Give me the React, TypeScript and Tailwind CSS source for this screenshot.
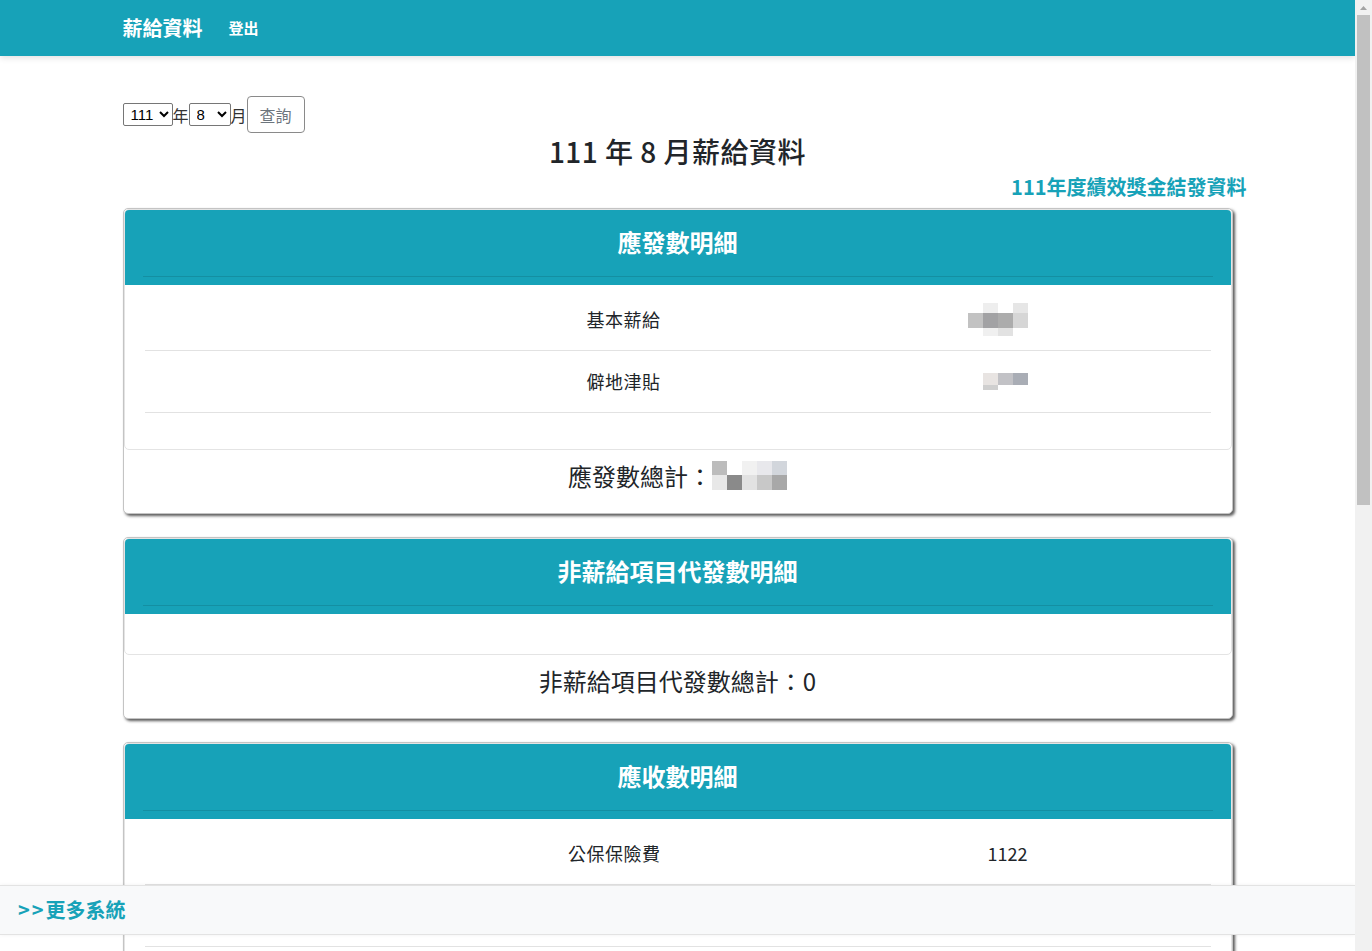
import React from "react";

const FONT = { fontFamily: '"Noto Sans CJK TC", "Noto Sans", sans-serif' };

type Cell = string | null;

function Mosaic({ rows }: { rows: { h: number; cells: Cell[] }[] }) {
  return (
    <span className="inline-flex flex-col">
      {rows.map((r, i) => (
        <span key={i} className="flex">
          {r.cells.map((c, j) => (
            <span
              key={j}
              className="block w-[15px]"
              style={{ height: r.h, backgroundColor: c ?? "transparent" }}
            />
          ))}
        </span>
      ))}
    </span>
  );
}

const salaryBase = (
  <Mosaic
    rows={[
      { h: 10, cells: [null, "#eeeeee", null, "#e6e6e6"] },
      { h: 15, cells: ["#c2c2c2", "#a2a2a4", "#acacac", "#d6d6d6"] },
      { h: 8, cells: [null, "#f0f0f0", "#e2e2e2", null] },
    ]}
  />
);

const remote = (
  <Mosaic
    rows={[
      { h: 12, cells: ["#e8e4e2", "#c2c2c6", "#a9adb5"] },
      { h: 5, cells: ["#cfcfcf", null, null] },
    ]}
  />
);

const totalBlur = (
  <Mosaic
    rows={[
      { h: 14, cells: ["#bcbcbc", null, "#f1f1f1", "#e8e8ec", "#d2d6dc"] },
      { h: 15, cells: ["#e8e8e8", "#8a8a8a", "#e2e2e2", "#c8c8c8", "#a8a8a8"] },
    ]}
  />
);

const smallBlur = (
  <Mosaic
    rows={[
      { h: 12, cells: ["#dedede", "#b4b4b8", "#c8c8cc"] },
      { h: 6, cells: [null, "#e4e4e4", null] },
    ]}
  />
);

type Row = { label: string; value: React.ReactNode };

function Section({
  title,
  rows,
  footer,
}: {
  title: string;
  rows: Row[];
  footer: React.ReactNode;
}) {
  return (
    <div className="border border-[#c4c4c4] rounded-[5px] bg-white shadow-[2px_2px_3px_rgba(0,0,0,0.65)] mb-[23px]">
      <div className="border border-[#e4e4e4] rounded-[5px] overflow-hidden">
        <div className="bg-[#17a2b8] h-[75px] flex flex-col">
          <div className="pt-[17px] h-[49px] text-center text-white text-[24px] leading-[30px] font-bold">
            {title}
          </div>
          <div className="mt-[17px] mx-[18px] border-t border-[#148fa2]" />
        </div>
        <div className="px-[20px] pt-[4px] pb-[36px]">
          {rows.map((r, i) => (
            <div
              key={i}
              className="flex items-center h-[62px] border-b border-[#e2e2e2] text-[18px] text-[#212529]"
            >
              <div className="w-[516px] text-right tracking-[0.5px]">{r.label}</div>
              <div className="w-[367px] flex justify-end">{r.value}</div>
            </div>
          ))}
        </div>
      </div>
      <div className="h-[63px] pt-[11px] flex items-start justify-center text-[24px] leading-[29px] text-[#212529]">
        {footer}
      </div>
    </div>
  );
}

const SELECT_FONT = { fontFamily: '"Liberation Sans", Arial, sans-serif' };

export default function App() {
  return (
    <div style={FONT} className="flex h-[951px] overflow-hidden bg-white text-[#212529]">
      <div className="relative w-[1355px] h-[951px] overflow-hidden">
        <nav className="h-[56px] bg-[#17a2b8] shadow-[0_2px_6px_rgba(0,0,0,0.12)]">
          <div className="w-[1110px] mx-auto h-full flex items-center">
            <span className="text-white text-[20px] font-bold">薪給資料</span>
            <span className="text-white text-[15px] font-bold ml-[26px]">登出</span>
          </div>
        </nav>

        <div className="w-[1110px] mx-auto pt-[40px]">
          <div className="flex items-center text-[16px] text-[#333]">
            <select
              defaultValue="111"
              style={SELECT_FONT}
              className="w-[50px] h-[23px] border border-[#767676] rounded-[2px] text-[15px] leading-[21px] py-0 pl-[3px] bg-white text-black"
            >
              <option>111</option>
            </select>
            <span className="leading-none">年</span>
            <select
              defaultValue="8"
              style={SELECT_FONT}
              className="w-[42px] h-[23px] border border-[#767676] rounded-[2px] text-[15px] leading-[21px] py-0 pl-[3px] bg-white text-black"
            >
              <option>8</option>
            </select>
            <span className="leading-none">月</span>
            <button className="w-[58px] h-[37px] border border-[#8a8a8a] rounded-[4px] text-[16px] text-[#6c757d] bg-white">
              查詢
            </button>
          </div>

          <h2 className="mt-[1px] text-center text-[28px] leading-[34px] font-medium tracking-[0.5px]">
            111 年 8 月薪給資料
          </h2>

          <div className="mt-[7px] mb-[9px] mr-[-14px] text-right text-[20px] leading-[24px] font-bold text-[#17a2b8]">
            111年度績效獎金結發資料
          </div>

          <Section
            title="應發數明細"
            rows={[
              { label: "基本薪給", value: salaryBase },
              { label: "僻地津貼", value: remote },
            ]}
            footer={
              <>
                <span>應發數總計：</span>
                {totalBlur}
              </>
            }
          />

          <Section
            title="非薪給項目代發數明細"
            rows={[]}
            footer={<span>非薪給項目代發數總計：0</span>}
          />

          <Section
            title="應收數明細"
            rows={[
              { label: "公保保險費", value: <span>1122</span> },
              { label: "健保費", value: smallBlur },
              { label: "所得稅", value: smallBlur },
              { label: "退撫基金", value: smallBlur },
            ]}
            footer={
              <>
                <span>應收數總計：</span>
                {totalBlur}
              </>
            }
          />
        </div>

        <div className="absolute left-0 right-0 bottom-[16px] h-[50px] bg-[#f8f9fa] border-y border-[#e3e3e3] shadow-[0_0_4px_rgba(0,0,0,0.06)] flex items-center pl-[18px]">
          <span className="text-[20px] font-bold text-[#17a2b8]">
            <span className="tracking-[2px]">&gt;&gt;</span>
            <span>更多系統</span>
          </span>
        </div>
      </div>

      <div className="w-[17px] h-[951px] bg-[#f1f1f1] flex flex-col items-center">
        <div className="h-[15px] w-full flex items-center justify-center">
          <svg width="9" height="6" viewBox="0 0 9 6">
            <path d="M4.5 1 L8 5 L1 5 Z" fill="#a3a3a3" />
          </svg>
        </div>
        <div className="w-[13px] h-[490px] bg-[#c1c1c1]" />
      </div>
    </div>
  );
}
